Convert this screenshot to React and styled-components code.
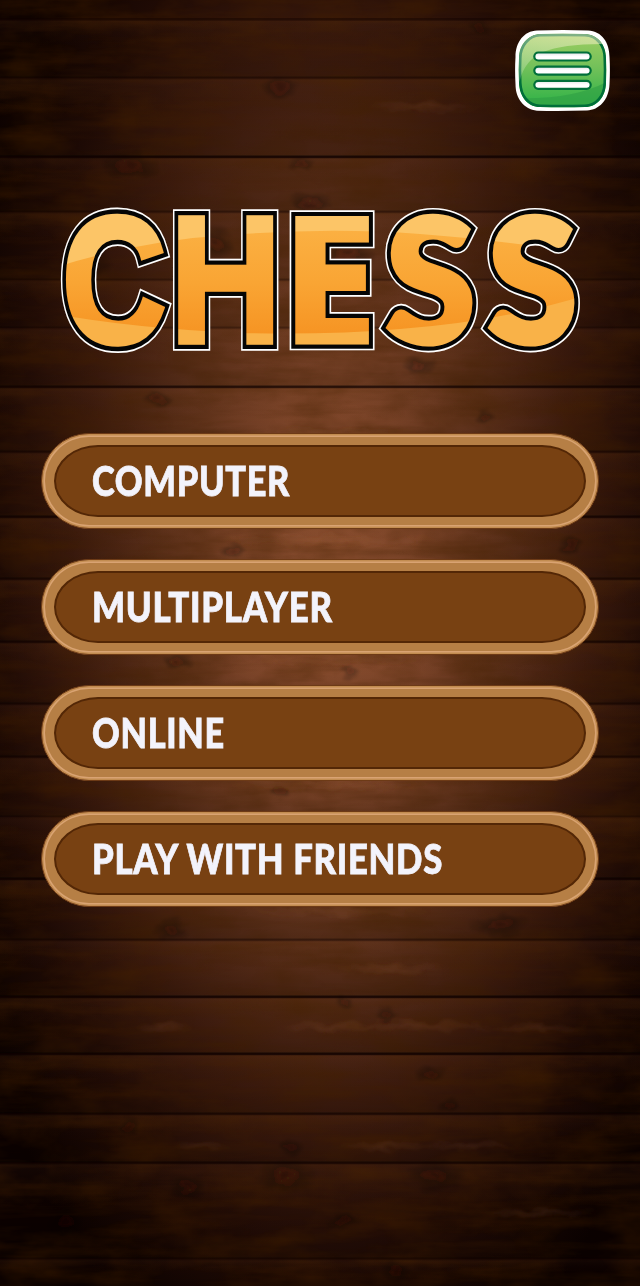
import React from 'react';
import styled, { createGlobalStyle } from 'styled-components';

const GlobalStyle = createGlobalStyle`
  * { box-sizing: border-box; }
  body { margin: 0; background: #070100; }
`;

const Screen = styled.main`
  position: relative;
  width: 640px;
  height: 1286px;
  overflow: hidden;
  display: flex;
  flex-direction: column;
  align-items: center;
  font-family: Lato, "Liberation Sans", sans-serif;
`;

const Backdrop = styled.svg`
  position: absolute;
  inset: 0;
  display: block;
`;

const TopBar = styled.header`
  position: relative;
  width: 100%;
  display: flex;
  justify-content: flex-end;
  padding: 30px 30px 0 0;
`;

const MenuButton = styled.button`
  width: 95px;
  height: 81px;
  padding: 0;
  border: 0;
  background: none;
  cursor: pointer;
  svg { display: block; }
`;

const Title = styled.h1`
  position: relative;
  width: 540px;
  height: 150px;
  margin: 95px 0 0;
  svg { display: block; }
`;

const Menu = styled.nav`
  position: relative;
  display: flex;
  flex-direction: column;
  gap: 30px;
  margin-top: 77px;
`;

const Item = styled.button`
  width: 558px;
  height: 96px;
  padding: 11px 12px;
  border: 1px solid #6d3a16;
  border-radius: 48px;
  background: #b67f45;
  box-shadow: inset 0 0 0 1.5px #c28c50, inset 0 0 0 3px #d9a372;
  cursor: pointer;
`;

const Face = styled.span`
  display: flex;
  align-items: center;
  height: 72px;
  padding: 0 0 2px 35.5px;
  border: 2px solid #532706;
  border-radius: 44px / 36px;
  background: #784112;
`;

const Label = styled.span`
  color: #f3f3fb;
  font: 900 41.2px/50px Lato, "Liberation Sans", sans-serif;
  letter-spacing: 0.8px;
  -webkit-text-stroke: 0.8px #f3f3fb;
  white-space: nowrap;
  transform: scaleX(${(p) => p.$fit});
  transform-origin: 0 50%;
`;

const letters = [
  { char: 'C', x: 62.2, y: 342, stretch: 0.8, family: 'Liberation Sans', weight: 700, size: 179.8 },
  { char: 'H', x: 170.2, y: 342.3, stretch: 0.856, family: 'Liberation Sans', weight: 700, size: 179.4 },
  { char: 'E', x: 282.8, y: 342.3, stretch: 0.968, family: 'Open Sans', weight: 700, size: 172.6 },
  { char: 'S', x: 385.4, y: 343, stretch: 0.95, family: 'Lato', weight: 900, size: 171.7 },
  { char: 'S', x: 487.6, y: 343, stretch: 0.95, family: 'Lato', weight: 900, size: 171.7 },
];

const items = [
  ['COMPUTER', 0.835],
  ['MULTIPLAYER', 0.846],
  ['ONLINE', 0.832],
  ['PLAY WITH FRIENDS', 0.843],
];

const seams = [
  [19.5, 0.6], [78, 0.5], [157, 1], [212, 0.45], [280, 0.35], [328, 0.35], [387, 0.9],
  [452, 0.6], [517, 0.9], [579, 0.7], [642, 0.8], [704, 0.6], [757, 0.7], [817, 0.3],
  [879, 1], [940, 0.5], [997, 1], [1054, 1], [1114, 0.75], [1163, 0.8], [1259, 0.5],
];

const knots = [
  [85, 262, 20, 12], [215, 243, 14, 13], [348, 254, 20, 10], [302, 163, 10, 5], [419, 366, 12, 8],
  [480, 28, 9, 7], [158, 398, 12, 6], [484, 417, 9, 6], [232, 550, 10, 6], [571, 545, 9, 7],
  [178, 660, 12, 6], [350, 672, 9, 5], [280, 793, 8, 5], [172, 930, 12, 9], [500, 925, 22, 9],
  [386, 1015, 8, 6], [345, 1001, 8, 5], [430, 1074, 12, 7], [448, 1106, 8, 6], [290, 1148, 10, 7],
  [130, 1126, 8, 6], [188, 1185, 14, 10], [66, 1222, 14, 10], [343, 1222, 14, 6], [286, 1176, 22, 14],
  [436, 1176, 22, 12], [396, 1271, 11, 9], [280, 88, 14, 9], [130, 165, 22, 10], [310, 202, 18, 6],
];

const streaks = [
  [425, 107, 60], [330, 433, 90], [330, 540, 120], [340, 660, 90], [330, 785, 110],
  [340, 911, 100], [390, 968, 60], [330, 1027, 50], [420, 1026, 90], [540, 1027, 50],
  [200, 1146, 30], [385, 1146, 50], [470, 1146, 50], [540, 1213, 60], [165, 1027, 30],
];

function Wood() {
  return (
    <Backdrop width="640" height="1286" viewBox="0 0 640 1286" aria-hidden="true">
      <defs>
        <radialGradient id="glow" gradientUnits="userSpaceOnUse" cx="0" cy="0" r="1" gradientTransform="translate(330 585) scale(410 840)">
          <stop offset="0" stopColor="#8c4f2f" />
          <stop offset="0.22" stopColor="#7d4529" />
          <stop offset="0.42" stopColor="#5c301a" />
          <stop offset="0.62" stopColor="#3b1a0d" />
          <stop offset="0.8" stopColor="#200b05" />
          <stop offset="1" stopColor="#0b0100" />
        </radialGradient>
        <radialGradient id="knot">
          <stop offset="0" stopColor="#120500" stopOpacity="0.4" />
          <stop offset="0.3" stopColor="#3b1c0e" stopOpacity="0.15" />
          <stop offset="0.45" stopColor="#120500" stopOpacity="0.26" />
          <stop offset="1" stopColor="#120500" stopOpacity="0" />
        </radialGradient>
        <radialGradient id="streak">
          <stop offset="0" stopColor="#b06c42" stopOpacity="0.15" />
          <stop offset="1" stopColor="#b06c42" stopOpacity="0" />
        </radialGradient>
        <linearGradient id="plank" x2="0" y2="1">
          <stop offset="0" stopColor="#a0623c" stopOpacity="0.07" />
          <stop offset="0.5" stopColor="#000" stopOpacity="0.02" />
          <stop offset="1" stopColor="#000" stopOpacity="0.12" />
        </linearGradient>
        <filter id="grain" x="0" y="0" width="100%" height="100%">
          <feTurbulence type="fractalNoise" baseFrequency="0.009 0.07" numOctaves="4" seed="11" />
          <feColorMatrix values="0 0 0 0 0.06  0 0 0 0 0.015  0 0 0 0 0  2.4 0 0 0 -0.95" />
        </filter>
        <filter id="blotch" x="0" y="0" width="100%" height="100%">
          <feTurbulence type="fractalNoise" baseFrequency="0.018 0.03" numOctaves="4" seed="4" />
          <feColorMatrix values="0 0 0 0 0.06  0 0 0 0 0.015  0 0 0 0 0  0 2 0 0 -0.8" />
        </filter>
        <filter id="warp" x="-20%" y="-20%" width="140%" height="140%">
          <feTurbulence type="fractalNoise" baseFrequency="0.05 0.09" numOctaves="2" seed="7" />
          <feDisplacementMap in="SourceGraphic" scale="14" xChannelSelector="R" yChannelSelector="G" />
          <feGaussianBlur stdDeviation="0.8" />
        </filter>
        <filter id="soft" x="-5%" y="-300%" width="110%" height="700%">
          <feGaussianBlur stdDeviation="0 0.7" />
        </filter>
      </defs>
      <rect width="640" height="1286" fill="url(#glow)" />
      <rect width="640" height="1286" filter="url(#grain)" opacity="0.3" />
      <rect width="640" height="1286" filter="url(#blotch)" opacity="0.4" />
      <g filter="url(#warp)">
        {knots.map(([x, y, rx, ry]) => (
          <ellipse key={`${x}-${y}`} cx={x} cy={y} rx={rx * 1.4} ry={ry * 1.4} fill="url(#knot)" />
        ))}
        {streaks.map(([x, y, rx]) => (
          <ellipse key={`${x}-${y}`} cx={x} cy={y} rx={rx} ry="6" fill="url(#streak)" />
        ))}
      </g>
      {seams.map(([y, o], i) => (
        <g key={y}>
          <rect y={y} width="640" height={(seams[i + 1] ? seams[i + 1][0] : 1286) - y} fill="url(#plank)" />
          <rect y={y - 1.4} width="640" height="2.6" fill="#0b0200" opacity={o * 0.75} filter="url(#soft)" />
        </g>
      ))}
    </Backdrop>
  );
}

function Logo() {
  return (
    <svg width="540" height="150" viewBox="50 206 540 150" role="img" aria-label="CHESS">
      <defs>
        <g id="word">
          {letters.map((l, i) => (
            <text
              key={i}
              transform={`translate(${l.x} ${l.y}) scale(${l.stretch} 1)`}
              fontFamily={`"${l.family}", sans-serif`}
              fontWeight={l.weight}
              fontSize={l.size}
              vectorEffect="non-scaling-stroke"
            >
              {l.char}
            </text>
          ))}
        </g>
        <linearGradient id="amber" gradientUnits="userSpaceOnUse" x1="0" y1="230" x2="0" y2="335">
          <stop offset="0" stopColor="#fbb042" />
          <stop offset="0.5" stopColor="#f9a534" />
          <stop offset="1" stopColor="#f69423" />
        </linearGradient>
        <mask id="face" maskUnits="userSpaceOnUse" x="50" y="200" width="540" height="160">
          <use href="#word" fill="#fff" stroke="#fff" strokeWidth="5" strokeMiterlimit="6" />
        </mask>
      </defs>
      <use href="#word" fill="#fff" stroke="#fff" strokeWidth="16.4" strokeMiterlimit="6" />
      <use href="#word" fill="#050505" stroke="#050505" strokeWidth="13.2" strokeMiterlimit="6" />
      <g mask="url(#face)">
        <rect x="50" y="200" width="540" height="160" fill="url(#amber)" />
        <path d="M50 200V269Q140 240 230 235Q330 227 420 234Q490 239 590 254V200Z" fill="#fcc567" />
        <path d="M50 360V313Q130 328 240 333Q330 335 400 329Q500 322 590 294V360Z" fill="#f9b248" />
      </g>
    </svg>
  );
}

function MenuIcon() {
  return (
    <svg width="95" height="81" viewBox="0 0 95 81" aria-hidden="true">
      <defs>
        <linearGradient id="leaf" x2="0" y2="1">
          <stop offset="0" stopColor="#a3cf62" />
          <stop offset="0.45" stopColor="#74c15a" />
          <stop offset="0.85" stopColor="#3ab54a" />
        </linearGradient>
        <linearGradient id="gloss" x1="0" y1="1" x2="0.4" y2="0">
          <stop offset="0" stopColor="#fff" stopOpacity="0.1" />
          <stop offset="1" stopColor="#fff3d0" stopOpacity="0.5" />
        </linearGradient>
        <linearGradient id="bar" x2="0" y2="1">
          <stop offset="0" stopColor="#e2e2e6" />
          <stop offset="0.5" stopColor="#fff" />
        </linearGradient>
        <clipPath id="tile">
          <path d="M25 4Q48 3.300 70 4C83 4.500 91 15 91 28Q91.700 40 91 53C90.500 67 82 77 70 77Q48 77.700 25 77C13 77 4.500 67 4 53Q3.300 40 4 28C4 15 13 4.500 25 4Z" />
        </clipPath>
      </defs>
      <path d="M22 .5Q48-.5 73 .5C87 1 94.500 13 94.500 27Q95.300 40 94.500 54C94 70 84 80 72 80.500Q48 81.300 22 80.800C9 79 .500 69 .500 54Q-.300 40 .500 27C.500 12 9 1 22 .500Z" fill="#fff" />
      <g clipPath="url(#tile)">
        <rect width="95" height="81" fill="url(#leaf)" />
        <path d="M0 68Q60 70 95 50V81H0Z" fill="#2f9e44" opacity=".6" />
        <path d="M25 5.200Q48 4.500 70 5.200C82.500 5.700 89.800 16 89.800 28Q90.500 40 89.800 53C89.300 66 81.500 75.800 70 75.800Q48 76.500 25 75.800C13.500 75.800 5.700 66 5.200 53Q4.500 40 5.200 28C5.200 16 13.500 5.700 25 5.200Z" fill="none" stroke="#006f3a" strokeWidth="2.800" />
        <path d="M0 0H95V14Q50 13 28 22Q10 30 5 50L0 60Z" fill="url(#gloss)" />
      </g>
      {[26.5, 40.6, 54.8].map((y) => (
        <rect key={y} x="19.300" y={y - 4} width="56.400" height="8" rx="4" fill="url(#bar)" stroke="#006f3a" strokeWidth="2.2" />
      ))}
    </svg>
  );
}

export default function App() {
  return (
    <Screen>
      <GlobalStyle />
      <Wood />
      <TopBar>
        <MenuButton aria-label="Menu"><MenuIcon /></MenuButton>
      </TopBar>
      <Title><Logo /></Title>
      <Menu>
        {items.map(([name, fit]) => (
          <Item key={name}>
            <Face><Label $fit={fit}>{name}</Label></Face>
          </Item>
        ))}
      </Menu>
    </Screen>
  );
}
